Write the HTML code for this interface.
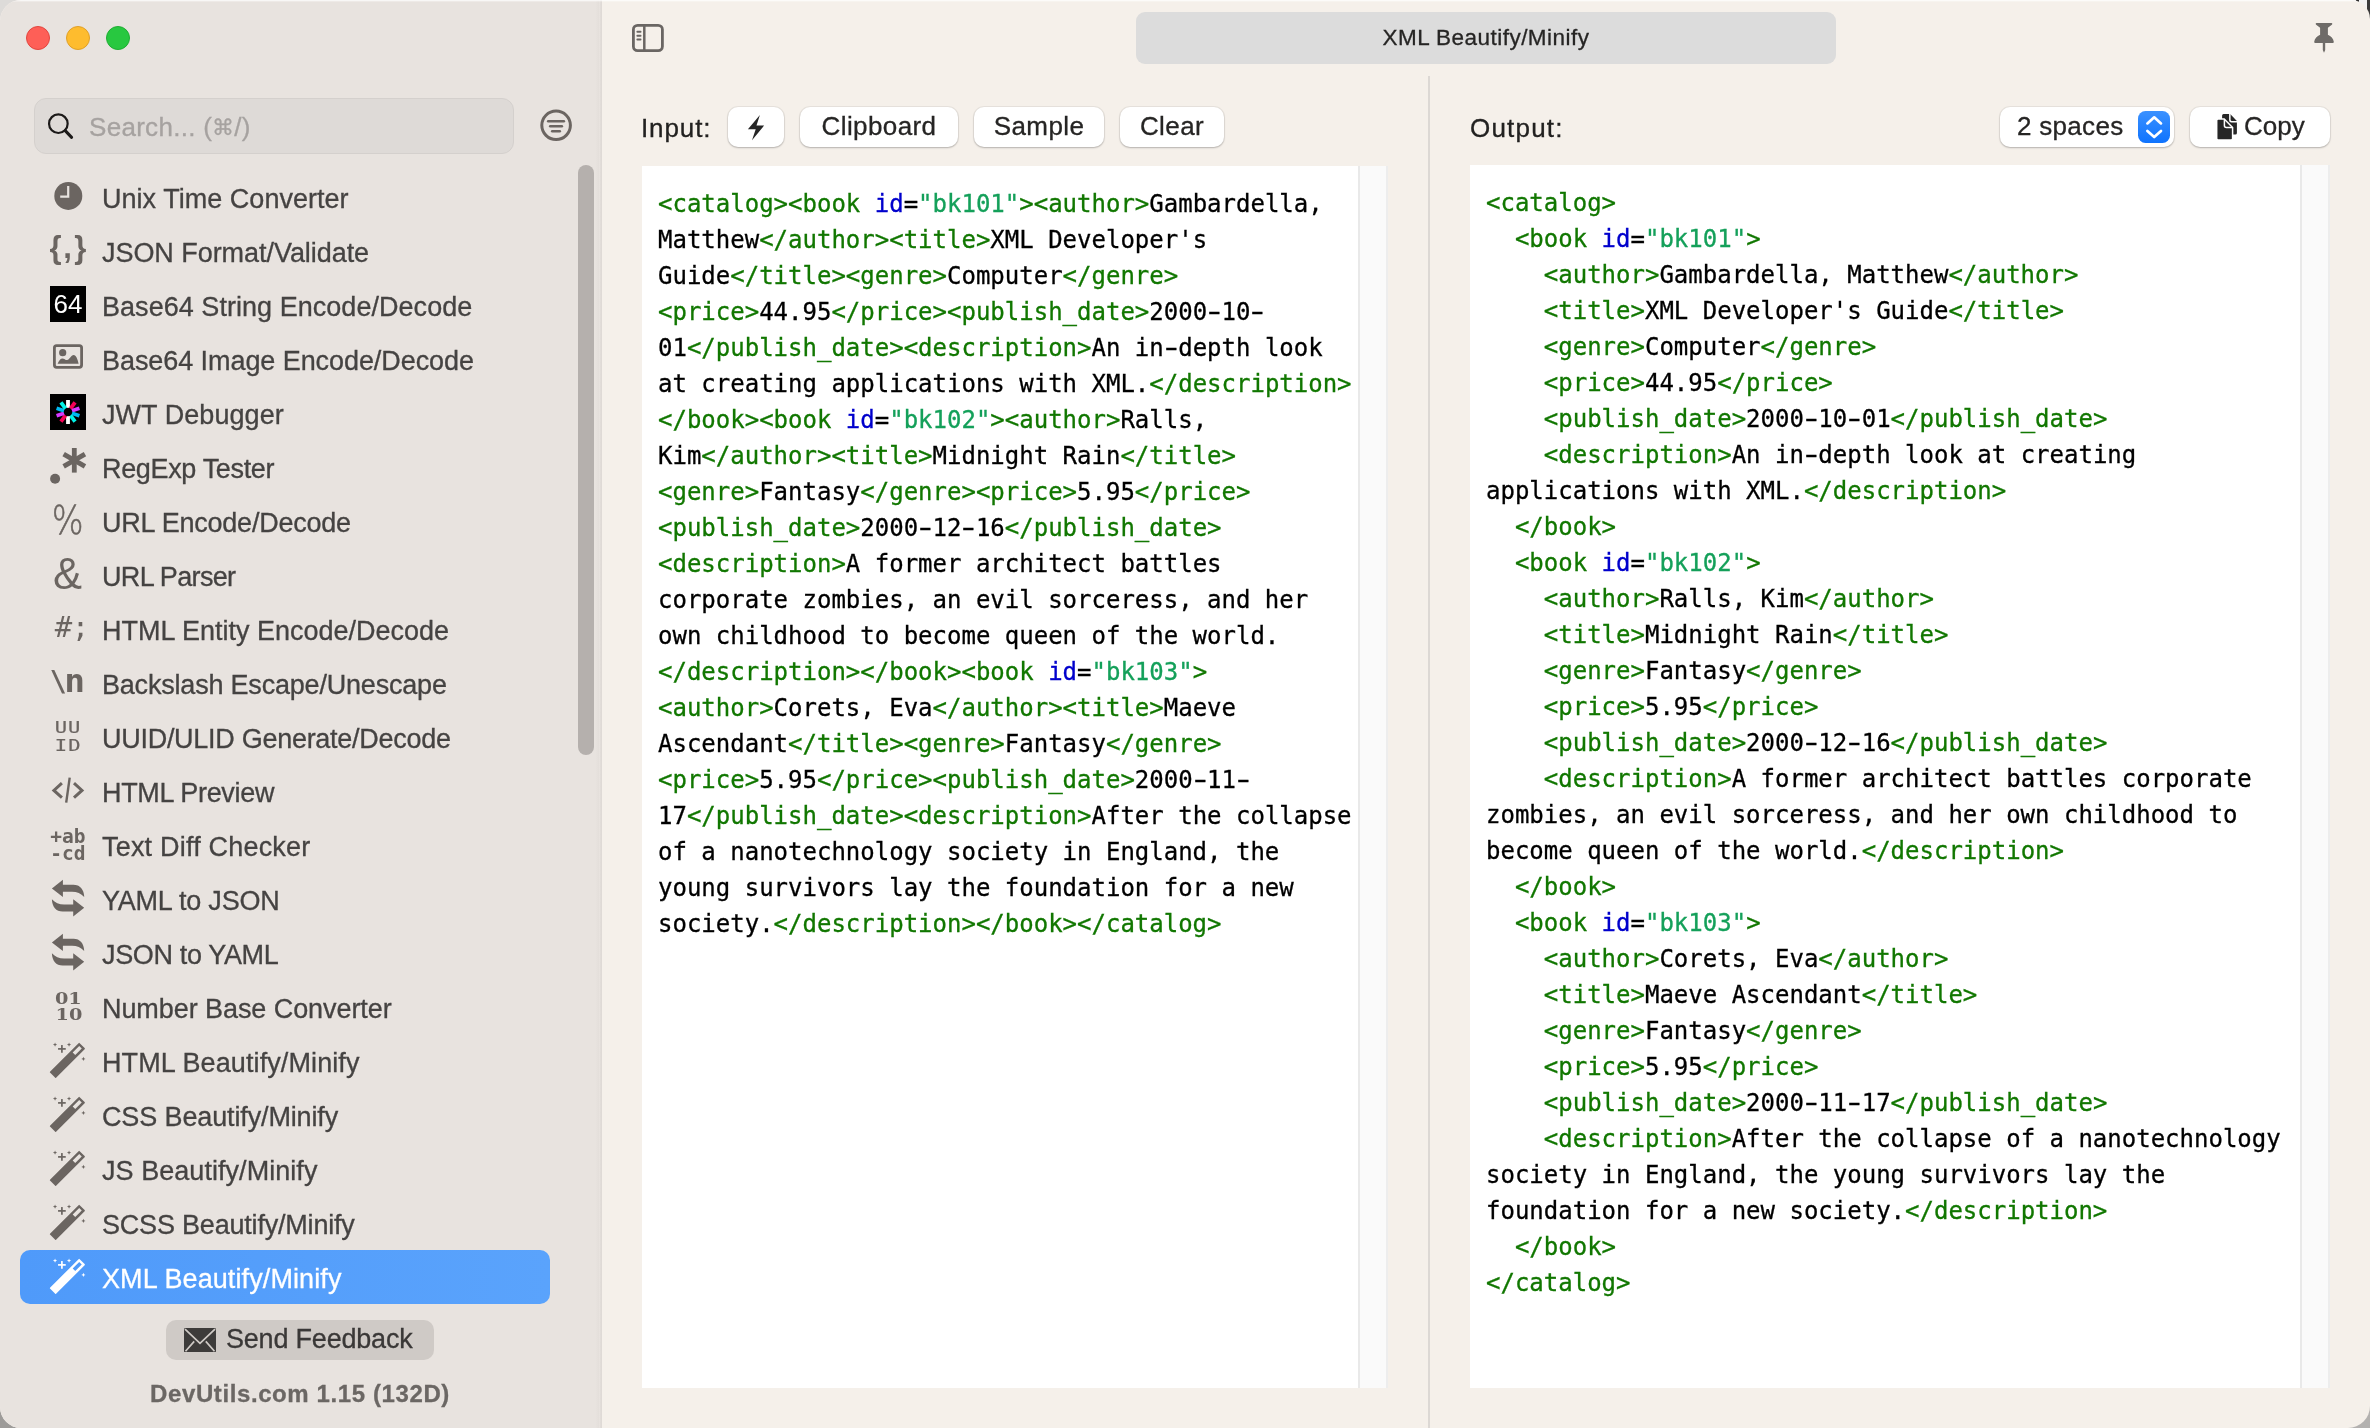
<!DOCTYPE html>
<html lang="en">
<head>
<meta charset="utf-8">
<title>DevUtils - XML Beautify/Minify</title>
<style>
*{box-sizing:border-box;margin:0;padding:0}
html,body{width:2370px;height:1428px;overflow:hidden;background:#b9b7b5}
.cn{position:absolute;width:24px;height:24px}
body{font-family:"Liberation Sans",sans-serif;color:#4a4746;position:relative;-webkit-text-stroke:.3px}
#win{position:absolute;left:0;top:0;width:2370px;height:1428px;border-radius:21px 19px 22px 21px;overflow:hidden;background:#f5f0ea;will-change:transform}
#side{position:absolute;left:0;top:0;width:602px;height:1428px;background:linear-gradient(90deg,#e8e3df 0,#e8e3df 595.5px,#e4dfdb 598.5px,#e9e4e0 600px,#dfdad6 600.7px,#dfdad6 601.7px,#f5f0ea 601.8px)}
.tl{position:absolute;top:26px;width:24px;height:24px;border-radius:50%}
#search{position:absolute;left:34px;top:98px;width:480px;height:56px;border-radius:12px;background:#dedad7;border:1px solid #d4d0cd}
#search span{position:absolute;left:54px;top:10px;font-size:26px;line-height:36px;letter-spacing:.3px;color:#a6a2a0;white-space:pre}
#search span i{font-style:normal;font-size:21.5px;letter-spacing:0;position:relative;top:-1px}
.it{position:absolute;left:20px;width:530px;height:54px;border-radius:10px}
.it .tx{position:absolute;left:82px;top:14px;font-size:27px;line-height:31px;white-space:pre;color:#454342}
.it.sel{background:linear-gradient(90deg,#4f9afa,#5aa3fc)}
.it.sel .tx{color:#fff}
#ico{position:absolute;left:0;top:0;z-index:3}
#sb{position:absolute;left:578px;top:165px;width:16px;height:590px;border-radius:8px;background:#b5b0ad}
#fb{position:absolute;left:166px;top:1320px;width:268px;height:40px;border-radius:10px;background:#cfcac6}
#fb span{position:absolute;left:60px;top:4px;font-size:27px;line-height:31px;letter-spacing:-.2px;color:#3a3837;white-space:pre}
#ver{position:absolute;left:0;top:1380px;width:600px;text-align:center;font-size:24px;letter-spacing:.6px;font-weight:700;color:#6b6764;white-space:pre}
#title{position:absolute;left:1136px;top:12px;width:700px;height:52px;border-radius:9px;background:#dcdcdc;text-align:center;font-size:22.5px;line-height:52px;color:#262524;letter-spacing:.47px;white-space:pre}
#div{position:absolute;left:1428px;top:76px;width:2px;height:1352px;background:#dcd8d4}
.lbl{position:absolute;font-size:26px;line-height:30px;letter-spacing:.9px;color:#222120;white-space:pre}
.btn{position:absolute;top:107px;height:40px;border-radius:10px;background:#fff;box-shadow:0 0 0 1px rgba(0,0,0,.05),0 1px 2px rgba(0,0,0,.22);font-size:26px;letter-spacing:.4px;color:#262524;text-align:center;line-height:38px;white-space:pre}
.ed{position:absolute;background:#fff}
.ed .trk{position:absolute;right:0;top:0;width:30px;height:100%;background:#fafafa;border-left:2px solid #e9e9e9;border-right:2px solid #ededed}
pre{position:absolute;left:16px;top:20px;font-family:"DejaVu Sans Mono","Liberation Mono",monospace;font-size:24px;line-height:36px;color:#000;white-space:pre;-webkit-text-stroke:.3px}
pre b{font-weight:400;display:inline-block;transform:scaleX(1.6)}
.t{color:#117700}.a{color:#0000cc}.s{color:#14a05a}
.abs{position:absolute}
</style>
</head>
<body>
<div class="cn" style="left:0;top:0;background:#dddbd9"></div>
<div class="cn" style="right:0;top:0;background:linear-gradient(90deg,#e6e6e6 0,#e6e6e6 40%,#2e2e2e 40%,#2e2e2e 55%,#f2f2f2 55%,#f2f2f2 88%,#3a3a3a 88%)"></div>
<div class="cn" style="left:0;bottom:0;background:#9d9b99"></div>
<div class="cn" style="right:0;bottom:0;background:#b3b1af"></div>
<div id="win">
<div id="side">
  <div class="tl" style="left:26px;background:#fe5f57;border:1px solid #e2463f"></div>
  <div class="tl" style="left:66px;background:#febc2e;border:1px solid #e0a028"></div>
  <div class="tl" style="left:106px;background:#28c840;border:1px solid #1fae33"></div>
  <div id="search"><span>Search... (<i>⌘</i>/)</span></div>
  <svg class="abs" style="left:44px;top:110px" width="32" height="32" viewBox="0 0 32 32"><circle cx="14.35" cy="13.7" r="9.3" fill="none" stroke="#1c1a19" stroke-width="2.2"/><line x1="21.2" y1="20.6" x2="27.6" y2="27.4" stroke="#1c1a19" stroke-width="3" stroke-linecap="round"/></svg>
  <svg class="abs" style="left:538px;top:107px" width="36" height="36" viewBox="0 0 36 36"><circle cx="18.1" cy="18.3" r="14.3" fill="none" stroke="#6b6561" stroke-width="3"/><g stroke="#6b6561" stroke-width="2.5" stroke-linecap="round"><line x1="10.2" y1="14.3" x2="25.9" y2="14.3"/><line x1="12.2" y1="19.3" x2="23.9" y2="19.3"/><line x1="14.2" y1="24.2" x2="21.8" y2="24.2"/></g></svg>
  <div id="sb"></div>
  <div class="it" style="top:170px"><span class="tx" style="letter-spacing:0.03px">Unix Time Converter</span></div>
  <div class="it" style="top:224px"><span class="tx" style="letter-spacing:-0.05px">JSON Format/Validate</span></div>
  <div class="it" style="top:278px"><span class="tx" style="letter-spacing:0.04px">Base64 String Encode/Decode</span></div>
  <div class="it" style="top:332px"><span class="tx" style="letter-spacing:-0.07px">Base64 Image Encode/Decode</span></div>
  <div class="it" style="top:386px"><span class="tx" style="letter-spacing:0.06px">JWT Debugger</span></div>
  <div class="it" style="top:440px"><span class="tx" style="letter-spacing:-0.34px">RegExp Tester</span></div>
  <div class="it" style="top:494px"><span class="tx" style="letter-spacing:-0.22px">URL Encode/Decode</span></div>
  <div class="it" style="top:548px"><span class="tx" style="letter-spacing:-0.66px">URL Parser</span></div>
  <div class="it" style="top:602px"><span class="tx" style="letter-spacing:-0.01px">HTML Entity Encode/Decode</span></div>
  <div class="it" style="top:656px"><span class="tx" style="letter-spacing:-0.2px">Backslash Escape/Unescape</span></div>
  <div class="it" style="top:710px"><span class="tx" style="letter-spacing:-0.28px">UUID/ULID Generate/Decode</span></div>
  <div class="it" style="top:764px"><span class="tx" style="letter-spacing:-0.33px">HTML Preview</span></div>
  <div class="it" style="top:818px"><span class="tx" style="letter-spacing:0.2px">Text Diff Checker</span></div>
  <div class="it" style="top:872px"><span class="tx" style="letter-spacing:-0.21px">YAML to JSON</span></div>
  <div class="it" style="top:926px"><span class="tx" style="letter-spacing:-0.35px">JSON to YAML</span></div>
  <div class="it" style="top:980px"><span class="tx" style="letter-spacing:-0.07px">Number Base Converter</span></div>
  <div class="it" style="top:1034px"><span class="tx" style="letter-spacing:0.1px">HTML Beautify/Minify</span></div>
  <div class="it" style="top:1088px"><span class="tx" style="letter-spacing:-0.13px">CSS Beautify/Minify</span></div>
  <div class="it" style="top:1142px"><span class="tx" style="letter-spacing:0.05px">JS Beautify/Minify</span></div>
  <div class="it" style="top:1196px"><span class="tx" style="letter-spacing:-0.2px">SCSS Beautify/Minify</span></div>
  <div class="it sel" style="top:1250px"><span class="tx" style="letter-spacing:0.1px">XML Beautify/Minify</span></div>
  <div id="fb"><svg class="abs" style="left:18px;top:7.7px" width="32" height="24.4" viewBox="0 0 32 24.4"><rect width="32" height="24.4" rx="1.5" fill="#3d3b3a"/><path d="M1,1.2 L16,15.4 L31,1.2 M1.5,23.2 L10.2,13.4 M30.5,23.2 L21.8,13.4" fill="none" stroke="#cfcac6" stroke-width="1.7"/></svg><span>Send Feedback</span></div>
  <div id="ver">DevUtils.com 1.15 (132D)</div>
<svg id="ico" width="601" height="1428" viewBox="0 0 601 1428">
<circle cx="68.3" cy="195.9" r="14" fill="#6b6561"/>
<polyline points="68.2,186 68.2,196.7 60.2,196.7" fill="none" stroke="#e8e3df" stroke-width="2.2"/>
<text x="55.6 67.6 80.4" y="257.5" text-anchor="middle" font-family="Liberation Sans, sans-serif" font-weight="700" font-size="31" fill="#6b6561">{,}</text>
<rect x="50" y="286" width="36" height="36" fill="#000"/>
<text x="68" y="313.3" text-anchor="middle" font-family="Liberation Sans, sans-serif" font-size="26" fill="#fff">64</text>
<rect x="54.4" y="345.6" width="27.2" height="21.7" rx="2.2" fill="none" stroke="#6b6561" stroke-width="2.8"/>
<circle cx="62.7" cy="352.7" r="3.6" fill="#6b6561"/>
<path d="M57.6,363.7 C59,361 60,358.4 62.1,358.4 C64.5,358.4 65.5,360.3 67.1,360.1 C69.5,359.8 71,355 73.7,355 C76,355 77.6,359 78.6,363.7 Z" fill="#6b6561"/>
<rect x="50" y="394" width="36" height="36" fill="#000"/>
<rect x="66.1" y="400" width="3.8" height="7.8" fill="#fff" transform="rotate(0 68 412)"/>
<rect x="66.1" y="400" width="3.8" height="7.8" fill="#f50057" transform="rotate(36 68 412)"/>
<rect x="66.1" y="400" width="3.8" height="7.8" fill="#d63aff" transform="rotate(72 68 412)"/>
<rect x="66.1" y="400" width="3.8" height="7.8" fill="#00b9f1" transform="rotate(108 68 412)"/>
<rect x="66.1" y="400" width="3.8" height="7.8" fill="#00f2e6" transform="rotate(144 68 412)"/>
<rect x="66.1" y="400" width="3.8" height="7.8" fill="#fff" transform="rotate(180 68 412)"/>
<rect x="66.1" y="400" width="3.8" height="7.8" fill="#f50057" transform="rotate(216 68 412)"/>
<rect x="66.1" y="400" width="3.8" height="7.8" fill="#d63aff" transform="rotate(252 68 412)"/>
<rect x="66.1" y="400" width="3.8" height="7.8" fill="#00b9f1" transform="rotate(288 68 412)"/>
<rect x="66.1" y="400" width="3.8" height="7.8" fill="#00f2e6" transform="rotate(324 68 412)"/>
<circle cx="55.1" cy="478.8" r="5" fill="#6b6561"/>
<rect x="71.9" y="448" width="4.8" height="24.6" fill="#6b6561" transform="rotate(0 74.3 460.3)"/>
<rect x="71.9" y="448" width="4.8" height="24.6" fill="#6b6561" transform="rotate(60 74.3 460.3)"/>
<rect x="71.9" y="448" width="4.8" height="24.6" fill="#6b6561" transform="rotate(120 74.3 460.3)"/>
<text transform="translate(67.7 534.3) scale(0.86 1)" text-anchor="middle" font-family="DejaVu Sans, sans-serif" font-weight="200" font-size="39" fill="#6b6561" stroke="#6b6561" stroke-width="0.5">%</text>
<text transform="translate(67.6 588.6) scale(1 1)" text-anchor="middle" font-family="Liberation Sans, sans-serif" font-size="43.5" fill="#6b6561">&amp;</text>
<text x="63.5 80.6" y="637" text-anchor="middle" font-family="DejaVu Sans Mono, monospace" font-size="29" fill="#6b6561">#;</text>
<text x="58.3" y="691.2" text-anchor="middle" font-family="DejaVu Sans Mono, monospace" font-weight="700" font-size="28" fill="#6b6561">\</text>
<text transform="translate(74.7 691.9) scale(1.08 1)" text-anchor="middle" font-family="DejaVu Sans Mono, monospace" font-weight="700" font-size="32" fill="#6b6561">n</text>
<text transform="translate(60.9 733) scale(1.28 1)" text-anchor="middle" font-family="DejaVu Sans Mono, monospace" font-size="16" fill="#6b6561" stroke="#6b6561" stroke-width="0.2">U</text>
<text transform="translate(74.1 733) scale(1.28 1)" text-anchor="middle" font-family="DejaVu Sans Mono, monospace" font-size="16" fill="#6b6561" stroke="#6b6561" stroke-width="0.2">U</text>
<text transform="translate(61.0 750.9) scale(1.28 1)" text-anchor="middle" font-family="DejaVu Sans Mono, monospace" font-size="16" fill="#6b6561" stroke="#6b6561" stroke-width="0.2">I</text>
<text transform="translate(74.5 750.9) scale(1.28 1)" text-anchor="middle" font-family="DejaVu Sans Mono, monospace" font-size="16" fill="#6b6561" stroke="#6b6561" stroke-width="0.2">D</text>
<polyline points="61.9,783.2 53.9,790.4 61.9,797.7" fill="none" stroke="#6b6561" stroke-width="3"/>
<polyline points="74,783.2 82,790.4 74,797.7" fill="none" stroke="#6b6561" stroke-width="3"/>
<line x1="69.7" y1="777.6" x2="66.2" y2="802.6" stroke="#6b6561" stroke-width="2.4"/>
<text x="50.3" y="842.9" font-family="DejaVu Sans Mono, monospace" font-weight="700" font-size="19.5" fill="#6b6561">+ab</text>
<text x="50.3" y="860" font-family="DejaVu Sans Mono, monospace" font-weight="700" font-size="19.5" fill="#6b6561">-cd</text>
<g transform="translate(0 0)" fill="#6b6561"><path d="M51.9,888.5 L62.9,879.8 L62.9,884.7 L73.5,884.7 C80,884.7 84,889.5 84.2,897 C81,893.5 77,891.8 72,891.8 L62.9,891.8 L62.9,896.9 Z"/><path d="M51.9,888.5 L62.9,879.8 L62.9,884.7 L73.5,884.7 C80,884.7 84,889.5 84.2,897 C81,893.5 77,891.8 72,891.8 L62.9,891.8 L62.9,896.9 Z" transform="rotate(180 68.05 898.1)"/></g>
<g transform="translate(0 54)" fill="#6b6561"><path d="M51.9,888.5 L62.9,879.8 L62.9,884.7 L73.5,884.7 C80,884.7 84,889.5 84.2,897 C81,893.5 77,891.8 72,891.8 L62.9,891.8 L62.9,896.9 Z"/><path d="M51.9,888.5 L62.9,879.8 L62.9,884.7 L73.5,884.7 C80,884.7 84,889.5 84.2,897 C81,893.5 77,891.8 72,891.8 L62.9,891.8 L62.9,896.9 Z" transform="rotate(180 68.05 898.1)"/></g>
<text transform="translate(68.3 1004.3) scale(1.17 1)" text-anchor="middle" font-family="DejaVu Serif, serif" font-weight="700" font-size="16.5" fill="#6b6561">01</text>
<text transform="translate(68.9 1019.7) scale(1.17 1)" text-anchor="middle" font-family="DejaVu Serif, serif" font-weight="700" font-size="16.5" fill="#6b6561">10</text>
<g transform="translate(0 0)" fill="#6b6561"><g transform="translate(53.04 1074.75) rotate(-45)"><path fill-rule="evenodd" d="M0,-4.3 H40.4 Q41.2,-4.3 41.2,-3.5 V3.5 Q41.2,4.3 40.4,4.3 H0 Q-0.6,4.3 -0.6,3.7 V-3.7 Q-0.6,-4.3 0,-4.3 Z M29.6,-1.8 V1.8 H38.8 V-1.8 Z"/></g><rect x="58.05" y="1048.05" width="7.7" height="1.7"/><rect x="61.05" y="1045.05" width="1.7" height="7.7"/><path d="M55.05,1042.5 L55.65,1044.0 L57.15,1044.6 L55.65,1045.1999999999998 L55.05,1046.6999999999998 L54.449999999999996,1045.1999999999998 L52.949999999999996,1044.6 L54.449999999999996,1044.0 Z"/><path d="M69.05,1042.5 L69.64999999999999,1044.0 L71.14999999999999,1044.6 L69.64999999999999,1045.1999999999998 L69.05,1046.6999999999998 L68.45,1045.1999999999998 L66.95,1044.6 L68.45,1044.0 Z"/><path d="M83.4,1056.8000000000002 L84.0,1058.3000000000002 L85.5,1058.9 L84.0,1059.5 L83.4,1061.0 L82.80000000000001,1059.5 L81.30000000000001,1058.9 L82.80000000000001,1058.3000000000002 Z"/></g>
<g transform="translate(0 54)" fill="#6b6561"><g transform="translate(53.04 1074.75) rotate(-45)"><path fill-rule="evenodd" d="M0,-4.3 H40.4 Q41.2,-4.3 41.2,-3.5 V3.5 Q41.2,4.3 40.4,4.3 H0 Q-0.6,4.3 -0.6,3.7 V-3.7 Q-0.6,-4.3 0,-4.3 Z M29.6,-1.8 V1.8 H38.8 V-1.8 Z"/></g><rect x="58.05" y="1048.05" width="7.7" height="1.7"/><rect x="61.05" y="1045.05" width="1.7" height="7.7"/><path d="M55.05,1042.5 L55.65,1044.0 L57.15,1044.6 L55.65,1045.1999999999998 L55.05,1046.6999999999998 L54.449999999999996,1045.1999999999998 L52.949999999999996,1044.6 L54.449999999999996,1044.0 Z"/><path d="M69.05,1042.5 L69.64999999999999,1044.0 L71.14999999999999,1044.6 L69.64999999999999,1045.1999999999998 L69.05,1046.6999999999998 L68.45,1045.1999999999998 L66.95,1044.6 L68.45,1044.0 Z"/><path d="M83.4,1056.8000000000002 L84.0,1058.3000000000002 L85.5,1058.9 L84.0,1059.5 L83.4,1061.0 L82.80000000000001,1059.5 L81.30000000000001,1058.9 L82.80000000000001,1058.3000000000002 Z"/></g>
<g transform="translate(0 108)" fill="#6b6561"><g transform="translate(53.04 1074.75) rotate(-45)"><path fill-rule="evenodd" d="M0,-4.3 H40.4 Q41.2,-4.3 41.2,-3.5 V3.5 Q41.2,4.3 40.4,4.3 H0 Q-0.6,4.3 -0.6,3.7 V-3.7 Q-0.6,-4.3 0,-4.3 Z M29.6,-1.8 V1.8 H38.8 V-1.8 Z"/></g><rect x="58.05" y="1048.05" width="7.7" height="1.7"/><rect x="61.05" y="1045.05" width="1.7" height="7.7"/><path d="M55.05,1042.5 L55.65,1044.0 L57.15,1044.6 L55.65,1045.1999999999998 L55.05,1046.6999999999998 L54.449999999999996,1045.1999999999998 L52.949999999999996,1044.6 L54.449999999999996,1044.0 Z"/><path d="M69.05,1042.5 L69.64999999999999,1044.0 L71.14999999999999,1044.6 L69.64999999999999,1045.1999999999998 L69.05,1046.6999999999998 L68.45,1045.1999999999998 L66.95,1044.6 L68.45,1044.0 Z"/><path d="M83.4,1056.8000000000002 L84.0,1058.3000000000002 L85.5,1058.9 L84.0,1059.5 L83.4,1061.0 L82.80000000000001,1059.5 L81.30000000000001,1058.9 L82.80000000000001,1058.3000000000002 Z"/></g>
<g transform="translate(0 162)" fill="#6b6561"><g transform="translate(53.04 1074.75) rotate(-45)"><path fill-rule="evenodd" d="M0,-4.3 H40.4 Q41.2,-4.3 41.2,-3.5 V3.5 Q41.2,4.3 40.4,4.3 H0 Q-0.6,4.3 -0.6,3.7 V-3.7 Q-0.6,-4.3 0,-4.3 Z M29.6,-1.8 V1.8 H38.8 V-1.8 Z"/></g><rect x="58.05" y="1048.05" width="7.7" height="1.7"/><rect x="61.05" y="1045.05" width="1.7" height="7.7"/><path d="M55.05,1042.5 L55.65,1044.0 L57.15,1044.6 L55.65,1045.1999999999998 L55.05,1046.6999999999998 L54.449999999999996,1045.1999999999998 L52.949999999999996,1044.6 L54.449999999999996,1044.0 Z"/><path d="M69.05,1042.5 L69.64999999999999,1044.0 L71.14999999999999,1044.6 L69.64999999999999,1045.1999999999998 L69.05,1046.6999999999998 L68.45,1045.1999999999998 L66.95,1044.6 L68.45,1044.0 Z"/><path d="M83.4,1056.8000000000002 L84.0,1058.3000000000002 L85.5,1058.9 L84.0,1059.5 L83.4,1061.0 L82.80000000000001,1059.5 L81.30000000000001,1058.9 L82.80000000000001,1058.3000000000002 Z"/></g>
<g transform="translate(0 216)" fill="#fff"><g transform="translate(53.04 1074.75) rotate(-45)"><path fill-rule="evenodd" d="M0,-4.3 H40.4 Q41.2,-4.3 41.2,-3.5 V3.5 Q41.2,4.3 40.4,4.3 H0 Q-0.6,4.3 -0.6,3.7 V-3.7 Q-0.6,-4.3 0,-4.3 Z M29.6,-1.8 V1.8 H38.8 V-1.8 Z"/></g><rect x="58.05" y="1048.05" width="7.7" height="1.7"/><rect x="61.05" y="1045.05" width="1.7" height="7.7"/><path d="M55.05,1042.5 L55.65,1044.0 L57.15,1044.6 L55.65,1045.1999999999998 L55.05,1046.6999999999998 L54.449999999999996,1045.1999999999998 L52.949999999999996,1044.6 L54.449999999999996,1044.0 Z"/><path d="M69.05,1042.5 L69.64999999999999,1044.0 L71.14999999999999,1044.6 L69.64999999999999,1045.1999999999998 L69.05,1046.6999999999998 L68.45,1045.1999999999998 L66.95,1044.6 L68.45,1044.0 Z"/><path d="M83.4,1056.8000000000002 L84.0,1058.3000000000002 L85.5,1058.9 L84.0,1059.5 L83.4,1061.0 L82.80000000000001,1059.5 L81.30000000000001,1058.9 L82.80000000000001,1058.3000000000002 Z"/></g>
</svg>
</div>
<svg class="abs" style="left:630px;top:22px" width="36" height="32" viewBox="0 0 36 32"><g fill="none" stroke="#6a6663"><rect x="3.4" y="3.3" width="29" height="25.4" rx="4.2" stroke-width="2.8"/><line x1="14.3" y1="3.3" x2="14.3" y2="28.7" stroke-width="2.5"/><g stroke-width="2" stroke-linecap="round"><line x1="7.4" y1="9.8" x2="10.5" y2="9.8"/><line x1="7.4" y1="13.7" x2="10.5" y2="13.7"/><line x1="7.4" y1="17.6" x2="10.5" y2="17.6"/></g></g></svg>
<div id="title">XML Beautify/Minify</div>
<svg class="abs" style="left:2310px;top:20px" width="28" height="36" viewBox="2310 20 28 36"><path fill="#6e6b68" d="M2316.6,22.9 h14.8 q0.9,0 0.9,0.9 q0,0.8 -0.8,1.3 l-3.6,2.6 v7 c3,1.2 5.5,4 5.9,7 q0.1,1.2 -1.1,1.2 h-7.5 v7 l-1.2,2.8 l-1.2,-2.8 v-7 h-7.5 q-1.2,0 -1.1,-1.2 c0.4,-3 2.9,-5.8 5.9,-7 v-7 l-3.6,-2.6 q-0.8,-0.5 -0.8,-1.3 q0,-0.9 0.9,-0.9 z"/></svg>
<div id="div"></div>
<div class="abs" style="left:0;top:0;width:2370px;height:2px;z-index:5;background:linear-gradient(rgba(255,255,255,.7) 0,rgba(255,255,255,.7) 1px,rgba(255,255,255,.25) 1px,rgba(255,255,255,.25) 2px)"></div>
<div class="lbl" style="left:641px;top:113px">Input:</div>
<div class="btn" style="left:728px;width:56px"><svg class="abs" style="left:16px;top:6px" width="24" height="30" viewBox="744 113 24 30"><path fill="#262626" d="M759.9,115.1 L747.9,129.2 L755.7,129.2 L752,140.3 L764.1,125.6 L756.5,125.6 Z"/></svg></div>
<div class="btn" style="left:800px;width:158px">Clipboard</div>
<div class="btn" style="left:974px;width:130px">Sample</div>
<div class="btn" style="left:1120px;width:104px">Clear</div>
<div class="lbl" style="left:1470px;top:113px;letter-spacing:1.2px">Output:</div>
<div class="btn" style="left:2000px;width:174px;text-align:left;padding-left:17px;letter-spacing:.3px">2 spaces<svg class="abs" style="left:138px;top:4px" width="32" height="32" viewBox="0 0 32 32"><defs><linearGradient id="bg" x1="0" y1="0" x2="0" y2="1"><stop offset="0" stop-color="#3a91ff"/><stop offset="1" stop-color="#0f73fe"/></linearGradient></defs><rect width="32" height="32" rx="7.5" fill="url(#bg)"/><g fill="none" stroke="#fff" stroke-width="2.7" stroke-linecap="round" stroke-linejoin="round"><polyline points="9.4,12.4 16.2,6.3 23,12.4"/><polyline points="9.4,19.9 16.2,26 23,19.9"/></g></svg></div>
<div class="btn" style="left:2190px;width:140px;text-align:left;padding-left:54px;letter-spacing:0">Copy<svg class="abs" style="left:26px;top:6px" width="22" height="28" viewBox="2216 113 22 28"><path fill="#262626" d="M2223.6,113.9 h6.6 l6.7,7.2 v12 q0,1.5 -1.5,1.5 h-11.8 q-1.5,0 -1.5,-1.5 v-17.7 q0,-1.5 1.5,-1.5 z"/><path fill="#fff" d="M2230.6,113.4 v6.3 q0,1.4 1.4,1.4 h5.6 v1.5 h-6.2 q-2.3,0 -2.3,-2.3 v-6.9 z"/><path fill="#262626" stroke="#fff" stroke-width="1.5" d="M2218.2,119 h6 l8.4,8.6 v10.9 q0,1.5 -1.5,1.5 h-12.9 q-1.5,0 -1.5,-1.5 v-18 q0,-1.5 1.5,-1.5 z"/><path fill="none" stroke="#fff" stroke-width="1.5" d="M2224.4,119.2 v6.3 q0,2 2,2 h6"/></svg></div>
<div class="ed" style="left:642px;top:166px;width:746px;height:1222px"><div class="trk"></div>
<pre><span class="t">&lt;catalog&gt;&lt;book</span> <span class="a">id</span>=<span class="s">"bk101"</span><span class="t">&gt;&lt;author&gt;</span>Gambardella,
Matthew<span class="t">&lt;/author&gt;&lt;title&gt;</span>XML Developer's
Guide<span class="t">&lt;/title&gt;&lt;genre&gt;</span>Computer<span class="t">&lt;/genre&gt;</span>
<span class="t">&lt;price&gt;</span>44.95<span class="t">&lt;/price&gt;&lt;publish_date&gt;</span>2000<b>-</b>10<b>-</b>
01<span class="t">&lt;/publish_date&gt;&lt;description&gt;</span>An in<b>-</b>depth look
at creating applications with XML.<span class="t">&lt;/description&gt;</span>
<span class="t">&lt;/book&gt;&lt;book</span> <span class="a">id</span>=<span class="s">"bk102"</span><span class="t">&gt;&lt;author&gt;</span>Ralls,
Kim<span class="t">&lt;/author&gt;&lt;title&gt;</span>Midnight Rain<span class="t">&lt;/title&gt;</span>
<span class="t">&lt;genre&gt;</span>Fantasy<span class="t">&lt;/genre&gt;&lt;price&gt;</span>5.95<span class="t">&lt;/price&gt;</span>
<span class="t">&lt;publish_date&gt;</span>2000<b>-</b>12<b>-</b>16<span class="t">&lt;/publish_date&gt;</span>
<span class="t">&lt;description&gt;</span>A former architect battles
corporate zombies, an evil sorceress, and her
own childhood to become queen of the world.
<span class="t">&lt;/description&gt;&lt;/book&gt;&lt;book</span> <span class="a">id</span>=<span class="s">"bk103"</span><span class="t">&gt;</span>
<span class="t">&lt;author&gt;</span>Corets, Eva<span class="t">&lt;/author&gt;&lt;title&gt;</span>Maeve
Ascendant<span class="t">&lt;/title&gt;&lt;genre&gt;</span>Fantasy<span class="t">&lt;/genre&gt;</span>
<span class="t">&lt;price&gt;</span>5.95<span class="t">&lt;/price&gt;&lt;publish_date&gt;</span>2000<b>-</b>11<b>-</b>
17<span class="t">&lt;/publish_date&gt;&lt;description&gt;</span>After the collapse
of a nanotechnology society in England, the
young survivors lay the foundation for a new
society.<span class="t">&lt;/description&gt;&lt;/book&gt;&lt;/catalog&gt;</span></pre>
</div>
<div class="ed" style="left:1470px;top:165px;width:860px;height:1223px"><div class="trk"></div>
<pre><span class="t">&lt;catalog&gt;</span>
  <span class="t">&lt;book</span> <span class="a">id</span>=<span class="s">"bk101"</span><span class="t">&gt;</span>
    <span class="t">&lt;author&gt;</span>Gambardella, Matthew<span class="t">&lt;/author&gt;</span>
    <span class="t">&lt;title&gt;</span>XML Developer's Guide<span class="t">&lt;/title&gt;</span>
    <span class="t">&lt;genre&gt;</span>Computer<span class="t">&lt;/genre&gt;</span>
    <span class="t">&lt;price&gt;</span>44.95<span class="t">&lt;/price&gt;</span>
    <span class="t">&lt;publish_date&gt;</span>2000<b>-</b>10<b>-</b>01<span class="t">&lt;/publish_date&gt;</span>
    <span class="t">&lt;description&gt;</span>An in<b>-</b>depth look at creating
applications with XML.<span class="t">&lt;/description&gt;</span>
  <span class="t">&lt;/book&gt;</span>
  <span class="t">&lt;book</span> <span class="a">id</span>=<span class="s">"bk102"</span><span class="t">&gt;</span>
    <span class="t">&lt;author&gt;</span>Ralls, Kim<span class="t">&lt;/author&gt;</span>
    <span class="t">&lt;title&gt;</span>Midnight Rain<span class="t">&lt;/title&gt;</span>
    <span class="t">&lt;genre&gt;</span>Fantasy<span class="t">&lt;/genre&gt;</span>
    <span class="t">&lt;price&gt;</span>5.95<span class="t">&lt;/price&gt;</span>
    <span class="t">&lt;publish_date&gt;</span>2000<b>-</b>12<b>-</b>16<span class="t">&lt;/publish_date&gt;</span>
    <span class="t">&lt;description&gt;</span>A former architect battles corporate
zombies, an evil sorceress, and her own childhood to
become queen of the world.<span class="t">&lt;/description&gt;</span>
  <span class="t">&lt;/book&gt;</span>
  <span class="t">&lt;book</span> <span class="a">id</span>=<span class="s">"bk103"</span><span class="t">&gt;</span>
    <span class="t">&lt;author&gt;</span>Corets, Eva<span class="t">&lt;/author&gt;</span>
    <span class="t">&lt;title&gt;</span>Maeve Ascendant<span class="t">&lt;/title&gt;</span>
    <span class="t">&lt;genre&gt;</span>Fantasy<span class="t">&lt;/genre&gt;</span>
    <span class="t">&lt;price&gt;</span>5.95<span class="t">&lt;/price&gt;</span>
    <span class="t">&lt;publish_date&gt;</span>2000<b>-</b>11<b>-</b>17<span class="t">&lt;/publish_date&gt;</span>
    <span class="t">&lt;description&gt;</span>After the collapse of a nanotechnology
society in England, the young survivors lay the
foundation for a new society.<span class="t">&lt;/description&gt;</span>
  <span class="t">&lt;/book&gt;</span>
<span class="t">&lt;/catalog&gt;</span></pre>
</div>
</div>
</body>
</html>
